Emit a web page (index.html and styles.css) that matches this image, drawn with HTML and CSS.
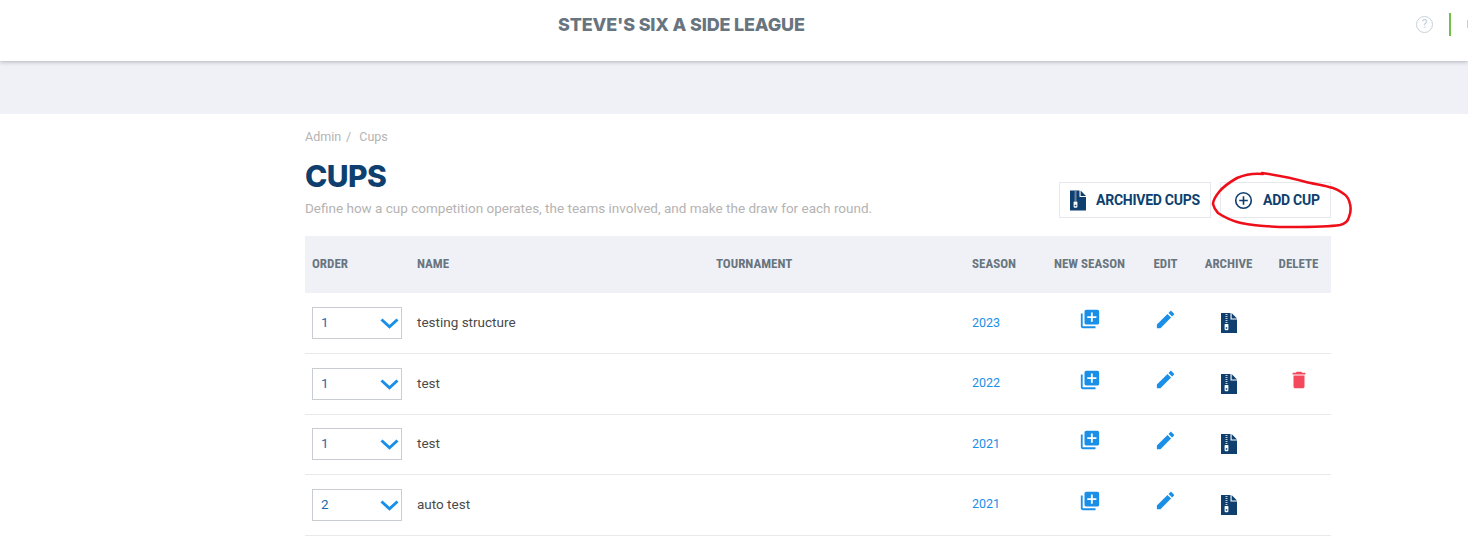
FILE: index.html
```html
<!DOCTYPE html>
<html lang="en">
<head>
<meta charset="utf-8">
<title>Cups</title>
<link rel="stylesheet" href="styles.css">
</head>
<body>
<svg class="defs" width="0" height="0" aria-hidden="true">
  <symbol id="zip" viewBox="0 0 16 20">
    <path fill="#0e3f6e" fill-rule="evenodd" d="M0 0H9.5V6.5H16V20H0ZM3.6 11.6a.6 .6 0 0 1 .6-.6H6.8a.6 .6 0 0 1 .6 .6V16a1.2 1.2 0 0 1-1.2 1.2H4.8A1.2 1.2 0 0 1 3.6 16ZM4.7 14.2v1.6H6.3v-1.6Z"/>
    <path fill="#0e3f6e" d="M10.6 0L16 5.4H10.6Z"/>
    <path fill="none" stroke="#fff" stroke-width="2" stroke-dasharray="1 1" opacity=".75" d="M5.5 1V11"/>
  </symbol>
  <symbol id="addlib" viewBox="0 0 24 24">
    <path d="M4 6H2v14c0 1.1.9 2 2 2h14v-2H4V6zm16-4H8c-1.1 0-2 .9-2 2v12c0 1.1.9 2 2 2h12c1.1 0 2-.9 2-2V4c0-1.1-.9-2-2-2zm-1 9h-4v4h-2v-4H9V9h4V5h2v4h4v2z"/>
  </symbol>
  <symbol id="pencil" viewBox="0 0 24 24">
    <path d="M3 17.25V21h3.75L17.81 9.94l-3.75-3.75L3 17.25zM20.71 7.04c.39-.39.39-1.02 0-1.41l-2.34-2.34c-.39-.39-1.02-.39-1.41 0l-1.83 1.83 3.75 3.75 1.83-1.83z"/>
  </symbol>
  <symbol id="trash" viewBox="0 0 24 24">
    <path d="M6 19c0 1.1.9 2 2 2h8c1.1 0 2-.9 2-2V7H6v12zM19 4h-3.5l-1-1h-5l-1 1H5v2h14V4z"/>
  </symbol>
  <symbol id="chev" viewBox="0 0 19 11">
    <path fill="none" stroke="currentColor" stroke-width="3" d="M1.5 1.5L9.5 8.8L17.5 1.5"/>
  </symbol>
</svg>

<header class="topbar">
  <div class="league">STEVE'S SIX A SIDE LEAGUE</div>
  <div class="top-tools">
    <span class="help">?</span>
    <span class="divider"></span>
    <span class="sliver"></span>
  </div>
</header>
<div class="band"></div>

<main class="content">
  <nav class="crumbs"><span>Admin</span><span class="sep">/</span><span>Cups</span></nav>
  <div class="head">
    <div class="intro">
      <h1>CUPS</h1>
      <p>Define how a cup competition operates, the teams involved, and make the draw for each round.</p>
    </div>
    <div class="actions">
      <button class="btn btn-archived" type="button"><svg class="btn-zip"><use href="#zip"/></svg>ARCHIVED CUPS</button>
      <button class="btn btn-add" type="button">
        <svg class="btn-plus" viewBox="0 0 20 20"><circle cx="10" cy="10" r="8.2" fill="none" stroke="#0e3f6e" stroke-width="1.7"/><path stroke="#0e3f6e" stroke-width="1.7" d="M10 5.5V14.5M5.5 10H14.5"/></svg>ADD CUP
      </button>
      <svg class="scribble" viewBox="0 0 145 60" aria-hidden="true">
        <path fill="none" stroke="#ee0f1a" stroke-width="2.6" stroke-linecap="round" stroke-linejoin="round" d="M53 4C44 3 34 5 27 8C20 12 13 17 9 22C5 27 3 31 3 34C4 38 5 40 8 43C14 47 22 51 31 53C46 56 62 57 80 57C98 57 118 57 130 55C135 54 138 51 139 47C141 42 141 38 140 34C139 29 137 26 134 24C129 20 124 18 119 17C112 15 104 14 96 12C82 8 66 5 52 3"/>
      </svg>
    </div>
  </div>

  <table class="cups">
    <colgroup>
      <col class="c-order"><col class="c-name"><col class="c-tour"><col class="c-season">
      <col class="c-new"><col class="c-edit"><col class="c-arch"><col class="c-del">
    </colgroup>
    <thead>
      <tr>
        <th>ORDER</th><th>NAME</th><th>TOURNAMENT</th><th>SEASON</th>
        <th class="mid">NEW SEASON</th><th class="mid">EDIT</th><th class="mid">ARCHIVE</th><th class="mid del">DELETE</th>
      </tr>
    </thead>
    <tbody>
      <tr>
        <td><div class="pick"><select><option>1</option><option>2</option></select><svg class="chev"><use href="#chev"/></svg></div></td>
        <td class="txt">testing structure</td><td></td><td class="txt season">2023</td>
        <td class="mid"><svg class="ic ic-new"><use href="#addlib"/></svg></td>
        <td class="mid"><svg class="ic ic-edit"><use href="#pencil"/></svg></td>
        <td class="mid"><svg class="ic-zip"><use href="#zip"/></svg></td>
        <td class="mid del"></td>
      </tr>
      <tr>
        <td><div class="pick"><select><option>1</option><option>2</option></select><svg class="chev"><use href="#chev"/></svg></div></td>
        <td class="txt">test</td><td></td><td class="txt season">2022</td>
        <td class="mid"><svg class="ic ic-new"><use href="#addlib"/></svg></td>
        <td class="mid"><svg class="ic ic-edit"><use href="#pencil"/></svg></td>
        <td class="mid"><svg class="ic-zip"><use href="#zip"/></svg></td>
        <td class="mid del"><svg class="ic ic-trash"><use href="#trash"/></svg></td>
      </tr>
      <tr>
        <td><div class="pick"><select><option>1</option><option>2</option></select><svg class="chev"><use href="#chev"/></svg></div></td>
        <td class="txt">test</td><td></td><td class="txt season">2021</td>
        <td class="mid"><svg class="ic ic-new"><use href="#addlib"/></svg></td>
        <td class="mid"><svg class="ic ic-edit"><use href="#pencil"/></svg></td>
        <td class="mid"><svg class="ic-zip"><use href="#zip"/></svg></td>
        <td class="mid del"></td>
      </tr>
      <tr>
        <td><div class="pick"><select><option>2</option><option>1</option></select><svg class="chev"><use href="#chev"/></svg></div></td>
        <td class="txt">auto test</td><td></td><td class="txt season">2021</td>
        <td class="mid"><svg class="ic ic-new"><use href="#addlib"/></svg></td>
        <td class="mid"><svg class="ic ic-edit"><use href="#pencil"/></svg></td>
        <td class="mid"><svg class="ic-zip"><use href="#zip"/></svg></td>
        <td class="mid del"></td>
      </tr>
    </tbody>
  </table>
</main>
</body>
</html>
```

FILE: styles.css
```css
* { box-sizing: border-box; }
html, body { margin: 0; padding: 0; height: 100%; overflow: hidden; background: #fff; }
body { font-family: Roboto, "Liberation Sans", sans-serif; color: #4a4a4a; }
.defs { position: absolute; }

.topbar {
  height: 61px;
  display: flex;
  align-items: center;
  position: relative;
  z-index: 1;
  background: #fff;
  box-shadow: 0 1px 4px rgba(60, 60, 80, .35);
}
.league {
  margin-left: 558px;
  padding-bottom: 12px;
  font-family: Inter, "Liberation Sans", sans-serif;
  font-size: 18px;
  font-weight: 800;
  letter-spacing: -.18px;
  color: #68757f;
}
.top-tools {
  margin-left: auto;
  padding-bottom: 13px;
  display: flex;
  align-items: center;
}
.help {
  width: 17px;
  height: 17px;
  margin-right: 16px;
  border: 1px solid #c5d1da;
  border-radius: 50%;
  font-size: 12px;
  line-height: 15px;
  text-align: center;
  color: #c5d1da;
}
.divider { width: 2px; height: 23px; background: #74bf4b; margin-right: 16px; }
.sliver { width: 1px; height: 8px; background: #c5d1da; }

.band { height: 53px; background: #f0f1f6; }

.content { width: 1026px; margin-left: 305px; }
.crumbs {
  display: flex;
  gap: 5px;
  padding-top: 15px;
  font-size: 12.5px;
  line-height: 15px;
  color: #b5b3b3;
}
.sep { margin-right: 3px; }

.head { display: flex; justify-content: space-between; align-items: flex-end; margin-top: 13px; }
h1 {
  margin: 0;
  font-family: Inter, "Liberation Sans", sans-serif;
  font-size: 30px;
  line-height: 38px;
  font-weight: 800;
  letter-spacing: -.6px;
  color: #0e3f6e;
}
.intro p { margin: 4px 0 0; font-size: 13.5px; line-height: 18px; color: #b5b3b3; }

.actions { position: relative; display: flex; gap: 9px; margin-bottom: -1px; }
.btn {
  height: 36px;
  display: flex;
  align-items: center;
  background: #fff;
  border: 1px solid #e6e8f0;
  font-family: Roboto, "Liberation Sans", sans-serif;
  font-size: 14px;
  font-weight: 700;
  letter-spacing: -.25px;
  color: #0e3f6e;
  padding: 0;
}
.btn-archived { width: 152px; padding-left: 10px; }
.btn-add { width: 111px; padding-left: 13px; }
.btn-zip { width: 16px; height: 21px; margin-right: 10px; }
.btn-plus { width: 19px; height: 19px; margin-right: 10px; }
.scribble { position: absolute; right: -24px; top: -12px; width: 145px; height: 60px; overflow: visible; pointer-events: none; }

.cups { width: 1026px; margin-top: 19px; table-layout: fixed; border-collapse: collapse; }
.c-order { width: 105px; }
.c-name { width: 299px; }
.c-tour { width: 256px; }
.c-season { width: 81px; }
.c-new { width: 87px; }
.c-edit { width: 65px; }
.c-arch { width: 61px; }
.c-del { width: 72px; }

.cups th {
  height: 57px;
  padding: 0 7px 3px;
  background: #f0f1f6;
  text-align: left;
  font-size: 13px;
  font-weight: 700;
  color: #68757f;
  white-space: nowrap;
  font-stretch: condensed;
}
.cups td {
  height: 60.5px;
  padding: 0 7px;
  border-bottom: 1px solid #e9e9ec;
  font-size: 13.5px;
  color: #4a4a4a;
  vertical-align: middle;
}
.cups td.txt { padding-bottom: 2px; }
.cups th.mid, .cups td.mid { text-align: center; padding-left: 0; padding-right: 0; }
.cups th.del, .cups td.del { padding-left: 7px; }
.cups td.season { font-size: 12.5px; color: #1a8fe8; }

.pick { position: relative; width: 90px; height: 32px; }
.pick select {
  appearance: none;
  width: 100%;
  height: 100%;
  padding: 0 0 2px 8px;
  background: #fff;
  border: 1px solid #c9ccd1;
  border-radius: 0;
  font-family: Roboto, "Liberation Sans", sans-serif;
  font-size: 13.5px;
  color: #1f6cab;
}
.chev { position: absolute; right: 3px; top: 11px; width: 19px; height: 11px; color: #1a8fe8; pointer-events: none; }

.ic { display: inline-block; width: 23px; height: 23px; fill: #1a8fe8; vertical-align: middle; }
.ic-new { width: 22px; height: 22px; position: relative; top: -4px; }
.ic-edit { position: relative; top: -4px; }
.ic-trash { width: 22px; height: 22px; fill: #f4495c; position: relative; top: -4px; }
.ic-zip { display: inline-block; width: 16px; height: 20px; vertical-align: middle; }
```
